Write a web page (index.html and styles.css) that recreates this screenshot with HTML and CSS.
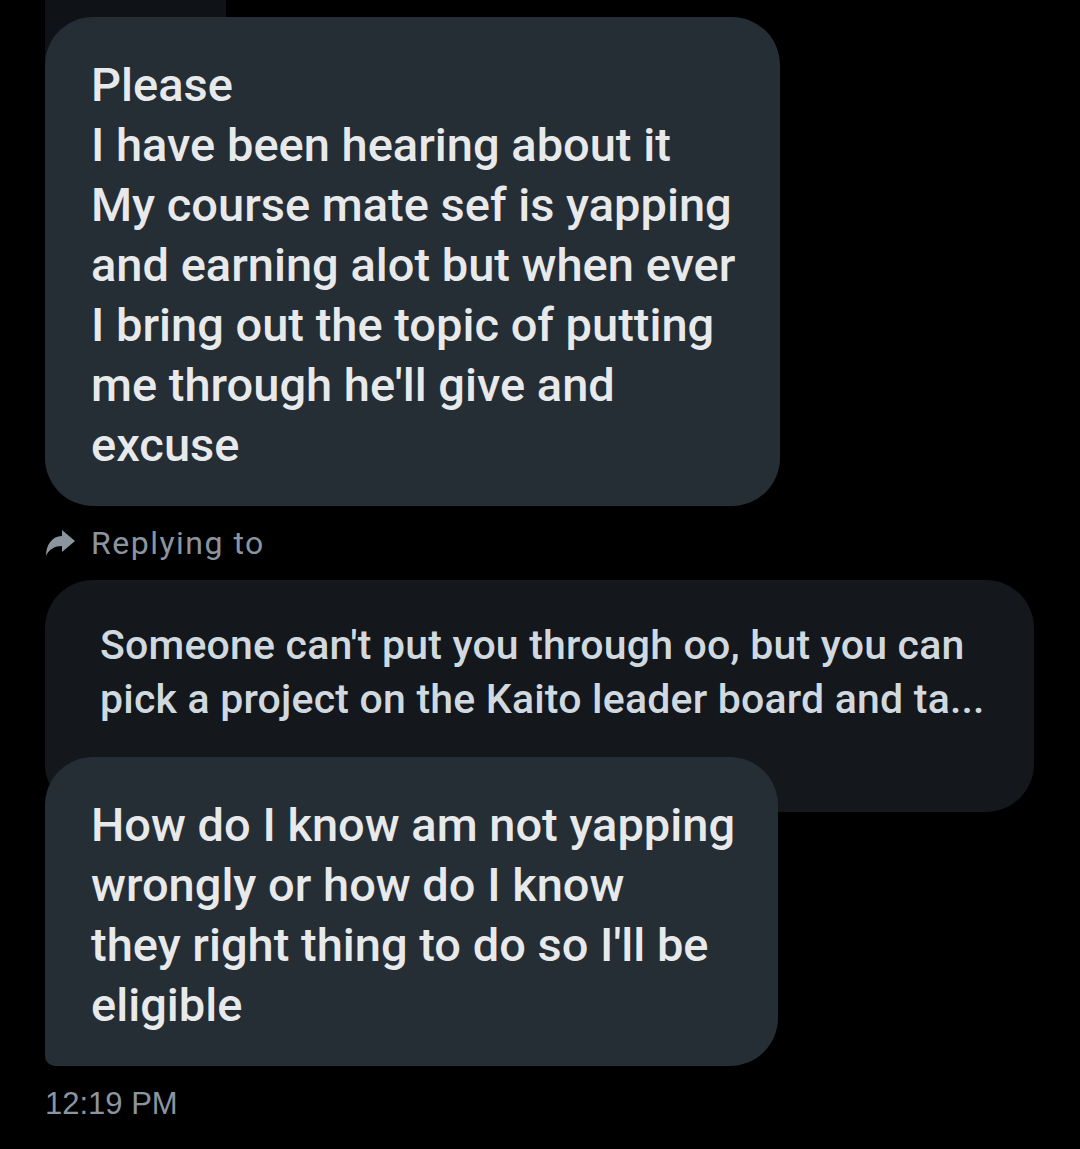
FILE: index.html
```html
<!DOCTYPE html>
<html>
<head>
<meta charset="utf-8">
<link rel="stylesheet" href="styles.css">
</head>
<body>
<div class="thread">
  <div class="prev-strip"></div>
  <div class="bubble bubble-first">
    <span class="line">Please</span>
    <span class="line">I have been hearing about it</span>
    <span class="line">My course mate sef is yapping</span>
    <span class="line">and earning alot but when ever</span>
    <span class="line">I bring out the topic of putting</span>
    <span class="line">me through he'll give and</span>
    <span class="line">excuse</span>
  </div>
  <div class="reply-label">
    <svg class="reply-icon" viewBox="0 0 30 28" width="30" height="28"><path d="M17 1 L30 12 L17 23 L17 17 C10 17 4 20 1 27 C1 16 7 7 17 7 Z" fill="#8b959f"/></svg>
    <span>Replying to</span>
  </div>
  <div class="quote">
    <span class="line">Someone can't put you through oo, but you can</span>
    <span class="line">pick a project on the Kaito leader board and ta...</span>
  </div>
  <div class="bubble bubble-last">
    <span class="line">How do I know am not yapping</span>
    <span class="line">wrongly or how do I know</span>
    <span class="line">they right thing to do so I'll be</span>
    <span class="line">eligible</span>
  </div>
  <div class="time">12:19 PM</div>
</div>
</body>
</html>
```

FILE: styles.css
```css
html, body {
  margin: 0;
  padding: 0;
  background: #000;
}
body {
  font-family: Roboto, "Noto Sans", sans-serif;
  color: #e7e9ea;
}
.thread {
  padding-left: 45px;
  display: flex;
  flex-direction: column;
  align-items: flex-start;
}
.prev-strip {
  width: 181px;
  height: 60px;
  background: #0f1216;
}
.bubble {
  background: #252d35;
  border-radius: 48px;
  font-size: 47px;
  font-weight: 500;
  line-height: 60px;
  letter-spacing: 0;
  color: #e7e9ea;
  box-sizing: border-box;
}
.line {
  display: block;
  white-space: nowrap;
}
.bubble-first {
  margin-top: -43px;
  width: 735px;
  padding: 38px 40px 31px 46px;
}
.reply-label {
  display: flex;
  align-items: center;
  gap: 16px;
  margin-top: 22px;
  height: 30px;
  color: #8b959f;
  font-size: 32px;
  letter-spacing: 1.5px;
}
.reply-icon {
  display: block;
}
.quote {
  margin-top: 22px;
  width: 989px;
  height: 232px;
  box-sizing: border-box;
  background: #14171b;
  border-radius: 48px;
  padding: 38px 40px 0 55px;
  font-size: 41px;
  font-weight: 500;
  line-height: 54px;
  letter-spacing: 0.2px;
  color: #d0d9df;
}
.bubble-last {
  margin-top: -55px;
  width: 733px;
  padding: 38px 40px 31px 46px;
  border-bottom-left-radius: 10px;
}
.time {
  margin-top: 20px;
  font-size: 31px;
  color: #8b959f;
  font-family: "Liberation Sans", Arial, sans-serif;
}
```
